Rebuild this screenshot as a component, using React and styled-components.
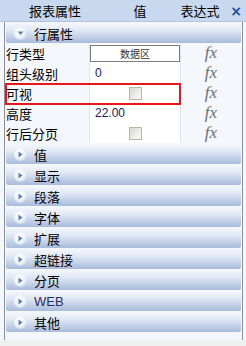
import React from "react";
import styled, { createGlobalStyle } from "styled-components";

const GlobalStyle = createGlobalStyle`
  html, body {
    margin: 0;
    padding: 0;
    background: #f4f7fc;
  }
  body {
    font-family: "Noto Sans CJK SC", "Liberation Sans", sans-serif;
    font-size: 12px;
    color: #000;
  }
`;

const rows = [
  { label: "行类型", kind: "input", value: "数据区" },
  { label: "组头级别", kind: "text", value: "0" },
  { label: "可视", kind: "check", highlight: true },
  { label: "高度", kind: "text", value: "22.00" },
  { label: "行后分页", kind: "check" }
];

const groups = ["值", "显示", "段落", "字体", "扩展", "超链接", "分页", "WEB", "其他"];

export default function App() {
  return (
    <Panel>
      <GlobalStyle />
      <Header>
        <HeadCell width={110}>报表属性</HeadCell>
        <HeadCell width={60}>值</HeadCell>
        <HeadCell width={60}>表达式</HeadCell>
        <Close>×</Close>
      </Header>
      <Body>
        <GroupBar>
          <Bullet>
            <svg width="7" height="5" viewBox="0 0 7 5">
              <path d="M0.5 0.5 L6.5 0.5 L3.5 4 Z" fill="#5a7db5" />
            </svg>
          </Bullet>
          <GroupLabel>行属性</GroupLabel>
        </GroupBar>
        <Grid>
          {rows.map(r => (
            <Row key={r.label} $highlight={r.highlight}>
              <LabelCell>{r.label}</LabelCell>
              <ValueCell>
                {r.kind === "input" && <InputBox>{r.value}</InputBox>}
                {r.kind === "text" && <ValueText>{r.value}</ValueText>}
                {r.kind === "check" && <Check />}
              </ValueCell>
              <FxCell>fx</FxCell>
            </Row>
          ))}
        </Grid>
        <Groups>
          {groups.map(g => (
            <GroupBar key={g}>
              <Bullet>
                <svg width="5" height="7" viewBox="0 0 5 7">
                  <path d="M0.5 0.5 L4.5 3.5 L0.5 6.5 Z" fill="#5a7db5" />
                </svg>
              </Bullet>
              <GroupLabel $latin={g === "WEB"}>{g}</GroupLabel>
            </GroupBar>
          ))}
        </Groups>
      </Body>
      <Footer />
    </Panel>
  );
}

const Panel = styled.div`
  width: 246px;
  height: 346px;
  display: flex;
  flex-direction: column;
  background: #f4f7fc;
  overflow: hidden;
`;

const Header = styled.div`
  height: 22px;
  box-sizing: border-box;
  flex: none;
  display: flex;
  align-items: center;
  background: #c8d8ee;
  border-bottom: 1px solid #b3c4de;
  font-size: 13px;
`;

const HeadCell = styled.div`
  width: ${p => p.width}px;
  flex: none;
  text-align: center;
`;

const Close = styled.div`
  flex: 1;
  color: #1e4fa8;
  font-family: "DejaVu Sans", sans-serif;
  font-size: 14px;
  font-weight: bold;
  text-align: center;
  padding-right: 4px;
`;

const Body = styled.div`
  flex: 1;
  display: flex;
  flex-direction: column;
  gap: 1px;
  padding: 1px 1px 0 1px;
  margin: 0 3px 0 4px;
  border-left: 1px solid #8a8f98;
  border-right: 1px solid #8a8f98;
`;

const Groups = styled.div`
  display: flex;
  flex-direction: column;
  gap: 1px;
`;

const GroupBar = styled.div`
  height: 20px;
  flex: none;
  display: flex;
  align-items: center;
  gap: 7px;
  padding-left: 8px;
  border-radius: 2px;
  background: linear-gradient(#f4f7fc 0%, #e2e9f5 35%, #a8bbdb 100%);
`;

const Bullet = styled.span`
  width: 13px;
  height: 13px;
  border-radius: 50%;
  display: flex;
  align-items: center;
  justify-content: center;
  background: radial-gradient(circle at 40% 35%, #ffffff 0%, #eef2f9 50%, #b4c5e0 100%);
`;

const GroupLabel = styled.span`
  font-size: 13px;
  color: ${p => (p.$latin ? "#2a2a6a" : "#000")};
  font-family: ${p =>
    p.$latin ? `"Liberation Sans", sans-serif` : `"Noto Sans CJK SC", sans-serif`};
`;

const Grid = styled.div`
  display: flex;
  flex-direction: column;
  background: #fff;
  margin-top: -1px;
`;

const Row = styled.div`
  position: relative;
  height: 20px;
  display: grid;
  grid-template-columns: 84px 91px 1fr;
  border-bottom: 1px solid #dde5f0;
  box-sizing: border-box;
  &::after {
    content: "";
    display: ${p => (p.$highlight ? "block" : "none")};
    position: absolute;
    z-index: 2;
    left: -1px;
    top: 0;
    width: 176px;
    height: 22px;
    border: 2px solid #e8161b;
    box-sizing: border-box;
    pointer-events: none;
  }
`;

const LabelCell = styled.div`
  display: flex;
  align-items: center;
  font-size: 13px;
  background: #f4f7fc;
  border-right: 1px solid #dde5f0;
`;

const ValueCell = styled.div`
  display: flex;
  align-items: center;
  border-right: 1px solid #dde5f0;
  background: #fff;
`;

const ValueText = styled.span`
  padding-left: 5px;
  font-size: 12px;
  font-family: "Liberation Sans", sans-serif;
  color: #1a1a60;
`;

const InputBox = styled.div`
  width: 100%;
  height: 17px;
  margin-top: 1px;
  border: 1px solid #7d7d7d;
  box-sizing: border-box;
  display: flex;
  align-items: center;
  justify-content: center;
  font-size: 10px;
  color: #333;
  background: #fff;
`;

const Check = styled.span`
  width: 13px;
  height: 13px;
  margin: 0 auto;
  box-sizing: border-box;
  border: 1px solid #bdb3a1;
  background: linear-gradient(135deg, #d9d9d3 0%, #f2f2ee 70%, #fafafa 100%);
`;

const FxCell = styled.div`
  display: flex;
  align-items: center;
  justify-content: center;
  font-family: "Liberation Serif", serif;
  font-style: italic;
  font-size: 17px;
  color: #6e6e6e;
  background: #f4f7fc;
`;

const Footer = styled.div`
  height: 6px;
  flex: none;
  background: #f0f0f0;
`;
